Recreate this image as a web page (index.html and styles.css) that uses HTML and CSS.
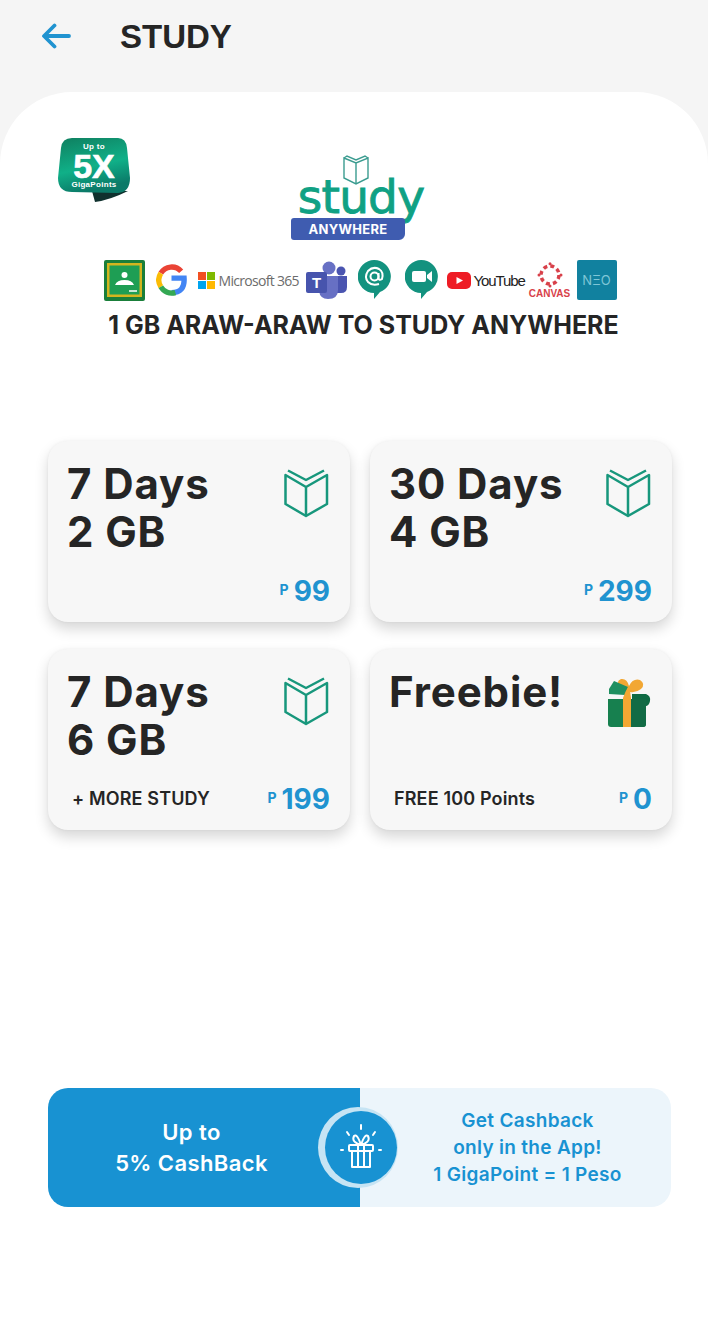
FILE: index.html
```html
<!DOCTYPE html>
<html lang="en">
<head>
    <meta charset="UTF-8">
    <meta name="viewport" content="width=device-width, initial-scale=1.0">
    <title>Study</title>
    <link rel="stylesheet" href="styles.css">
</head>
<body>
    <header class="topbar">
        <svg class="back" viewBox="0 0 30 26" width="30" height="26"><path d="M28 13H4M13.500 2.500L3 13 13.500 23.500" fill="none" stroke="#2093d0" stroke-width="3.800" stroke-linecap="round" stroke-linejoin="round"/></svg>
        <h1>STUDY</h1>
    </header>

    <main class="sheet">
        <section class="promo">
            <div class="badge">
                <svg class="badge-bg" viewBox="0 0 72 64" width="72" height="64">
                    <defs><linearGradient id="bg" x1="0" y1="0" x2="0.300" y2="1"><stop offset="0" stop-color="#0f7f5f"/><stop offset=".6" stop-color="#10b088"/><stop offset="1" stop-color="#0b7a68"/></linearGradient></defs>
                    <path d="M34 53L37 64Q52 62 70 53Z" fill="#10312e"/>
                    <path d="M14 0H60Q68 0 69 10L72 40Q72 54 60 55L14 54Q0 54 0 40L3 10Q4 0 14 0Z" fill="url(#bg)"/>
                </svg>
                <div class="badge-text">
                    <span class="badge-small">Up to</span>
                    <span class="badge-big">5X</span>
                    <span class="badge-small">GigaPoints</span>
                </div>
            </div>

            <div class="logo">
                <svg class="logo-book" viewBox="0 0 28 30" width="28" height="30"><path d="M2 3L14 8 26 3V23L14 29 2 23ZM14 8V29M2 3L5 1 14 5 23 1 26 3" fill="none" stroke="#3b9c90" stroke-width="1.400"/></svg>
                <span class="logo-word">study</span>
                <span class="logo-tag">ANYWHERE</span>
            </div>

            <div class="apps">
                <svg viewBox="0 0 41 41" width="41" height="41"><rect width="41" height="41" rx="2" fill="#1a7f3a"/><rect x="3" y="3" width="35" height="34" fill="#d3b51e"/><rect x="5.500" y="5.500" width="30" height="29" fill="#1e9e54"/><circle cx="20.500" cy="15" r="3" fill="#fff"/><path d="M11 25Q13 20 20.500 20T30 25Z" fill="#fff"/><path d="M25 31H33" stroke="#fff" stroke-width="1.500"/></svg>
                <svg viewBox="0 0 32 32" width="31" height="32"><path d="M16 14H29Q30 29 16 29" fill="none" stroke="#4285f4" stroke-width="5.500"/><path d="M26 7A13 13 0 0 0 5 9" fill="none" stroke="#ea4335" stroke-width="5.500"/><path d="M5 9A13 13 0 0 0 5 23" fill="none" stroke="#fbbc05" stroke-width="5.500"/><path d="M5 23A13 13 0 0 0 20 29" fill="none" stroke="#34a853" stroke-width="5.500"/></svg>
                <div class="ms">
                    <svg viewBox="0 0 17 17" width="17" height="17"><rect width="8" height="8" fill="#f25022"/><rect x="9" width="8" height="8" fill="#7fba00"/><rect y="9" width="8" height="8" fill="#00a4ef"/><rect x="9" y="9" width="8" height="8" fill="#ffb900"/></svg>
                    <span>Microsoft 365</span>
                </div>
                <svg class="teams" viewBox="0 0 41 38" width="41" height="38"><circle cx="23" cy="7" r="6.500" fill="#6770c4"/><circle cx="35" cy="10" r="4.500" fill="#4a54b0"/><path d="M29 15H41V26Q41 32 35 32H29Z" fill="#4a54b0"/><path d="M13 15H32V29Q32 38 22 38 14 38 13 30Z" fill="#6770c4"/><rect y="11" width="21" height="21" rx="2" fill="#4754ad"/><text x="10.500" y="27" class="teams-t">T</text></svg>
                <svg viewBox="0 0 33 40" width="33" height="40"><path d="M16.500 0A16.500 16.500 0 0 1 22 32L16 39V33A16.500 16.500 0 0 1 16.500 0Z" fill="#13927f"/><circle cx="16.500" cy="16.500" r="4" fill="none" stroke="#fff" stroke-width="2"/><path d="M20.500 13V18Q21 21 24 19 26 12 21 9 15 6 10 11 6 17 10 22 14 26 21 24" fill="none" stroke="#fff" stroke-width="2"/></svg>
                <svg class="meet" viewBox="0 0 33 40" width="33" height="40"><path d="M16.500 0A16.500 16.500 0 0 1 22 32L16 39V33A16.500 16.500 0 0 1 16.500 0Z" fill="#13927f"/><rect x="7" y="11" width="14" height="11" rx="2" fill="#fff"/><path d="M22 15L27 11V22L22 18Z" fill="#fff"/></svg>
                <div class="yt">
                    <svg viewBox="0 0 24 17" width="24" height="17"><rect width="24" height="17" rx="5" fill="#ee1c25"/><path d="M9.500 5L16 8.500 9.500 12Z" fill="#fff"/></svg>
                    <span>YouTube</span>
                </div>
                <div class="canvas">
                    <svg viewBox="0 0 26 26" width="26" height="26"><circle cx="13" cy="13" r="9" fill="none" stroke="#d8414a" stroke-width="3.500" stroke-dasharray="4 3.070"/><circle cx="13" cy="1.800" r="1.500" fill="#d8414a"/><circle cx="24" cy="13" r="1.500" fill="#d8414a"/><circle cx="13" cy="24" r="1.500" fill="#d8414a"/><circle cx="2" cy="13" r="1.500" fill="#d8414a"/></svg>
                    <span>CANVAS</span>
                </div>
                <div class="neo">NΞO</div>
            </div>

            <h2 class="headline">1 GB ARAW-ARAW TO STUDY ANYWHERE</h2>
        </section>

        <section class="plans">
            <article class="plan">
                <div class="plan-top">
                    <h3>7 Days<br>2 GB</h3>
                    <svg class="plan-icon" viewBox="0 0 46 50" width="46" height="50"><use href="#book"/></svg>
                </div>
                <div class="plan-bottom">
                    <span class="note"></span>
                    <span class="price"><small>P</small>99</span>
                </div>
            </article>
            <article class="plan">
                <div class="plan-top">
                    <h3>30 Days<br>4 GB</h3>
                    <svg class="plan-icon" viewBox="0 0 46 50" width="46" height="50"><use href="#book"/></svg>
                </div>
                <div class="plan-bottom">
                    <span class="note"></span>
                    <span class="price"><small>P</small>299</span>
                </div>
            </article>
            <article class="plan">
                <div class="plan-top">
                    <h3>7 Days<br>6 GB</h3>
                    <svg class="plan-icon" viewBox="0 0 46 50" width="46" height="50"><use href="#book"/></svg>
                </div>
                <div class="plan-bottom">
                    <span class="note">+ MORE STUDY</span>
                    <span class="price"><small>P</small>199</span>
                </div>
            </article>
            <article class="plan">
                <div class="plan-top">
                    <h3>Freebie!</h3>
                    <svg class="plan-icon" viewBox="0 0 46 50" width="46" height="50">
                        <g transform="translate(2 1)">
                            <path d="M12 12Q7 3 13 1 19 0 21 8 25 0 32 2 38 6 33 11 28 15 22 14Z" fill="#f2a733"/>
                            <path d="M1 11L6 3 20 9 17 17 1 16Z" fill="#1f8f60"/>
                            <path d="M24 16H38Q43 18 42 23 41 29 36 28H24Z" fill="#0f6a44"/>
                            <path d="M0 21H38V46Q38 49 35 49H3Q0 49 0 46Z" fill="#17804f"/>
                            <path d="M23 21H38V46Q38 49 35 49H23Z" fill="#126b45"/>
                            <path d="M15 49V20Q17 14 20 9 23 14 23 20V49Z" fill="#f2a733"/>
                        </g>
                    </svg>
                </div>
                <div class="plan-bottom">
                    <span class="note">FREE 100 Points</span>
                    <span class="price"><small>P</small>0</span>
                </div>
            </article>
        </section>

        <section class="cashback">
            <div class="cashback-left">Up to<br>5% CashBack</div>
            <div class="cashback-right">Get Cashback<br>only in the App!<br>1 GigaPoint = 1 Peso</div>
            <div class="gift-circle">
                <svg viewBox="0 0 44 48" width="44" height="48"><g fill="none" stroke="#fff" stroke-width="2" stroke-linecap="round" stroke-linejoin="round"><rect x="10" y="21" width="24" height="6" rx="1"/><path d="M13 27V43H31V27M19 21V43M25 21V43M22 21Q12 18 15 12 18 9 22 21 26 9 29 12 32 18 22 21ZM22 1V5M8 8L10 11M36 8L34 11M2 26H4M40 26H42"/></g></svg>
            </div>
        </section>
    </main>

    <svg class="defs" width="0" height="0"><defs><g id="book" fill="none" stroke="#17977c" stroke-width="2.500" stroke-linejoin="round"><path d="M1.500 6L22 18 43 6V35L22 47 1.500 35ZM22 18V47"/><path d="M4 1.500L22 11 40 1.500"/></g></defs></svg>
</body>
</html>
```

FILE: styles.css
```css
* {
    box-sizing: border-box;
}
body {
    margin: 0;
    width: 708px;
    min-height: 1334px;
    background-color: #f5f5f5;
    font-family: Inter, "Liberation Sans", sans-serif;
    color: #252525;
    display: flex;
    flex-direction: column;
}
.topbar {
    height: 92px;
    flex: none;
    display: flex;
    align-items: flex-start;
    padding: 23px 0 0 41px;
}
.topbar h1 {
    margin: -8px 0 0 49px;
    font-family: "Liberation Sans", sans-serif;
    font-size: 33px;
    line-height: 44px;
    font-weight: 700;
}
.sheet {
    flex: 1;
    background-color: #fff;
    border-radius: 72px 72px 0 0;
    padding: 46px 36px 0 48px;
    display: flex;
    flex-direction: column;
}
.promo {
    position: relative;
    display: flex;
    flex-direction: column;
    align-items: center;
    height: 303px;
}
.badge {
    position: absolute;
    left: 10px;
    top: 0;
    width: 72px;
    height: 64px;
}
.badge-bg {
    display: block;
}
.badge-text {
    position: absolute;
    top: 4px;
    left: 0;
    width: 72px;
    display: flex;
    flex-direction: column;
    align-items: center;
    color: #fff;
    font-family: "Liberation Sans", sans-serif;
    font-weight: 700;
}
.badge-small {
    font-size: 8px;
    line-height: 10px;
    letter-spacing: .3px;
}
.badge-big {
    font-size: 34px;
    line-height: 28px;
    -webkit-text-stroke: .6px #fff;
}
.logo {
    margin: 17px 0 0 -2px;
    display: flex;
    flex-direction: column;
    align-items: center;
    position: relative;
    width: 136px;
    height: 85px;
}
.logo-book {
    margin-left: -6px;
    flex: none;
}
.logo-word {
    margin: -12px 0 0 4px;
    font-family: "DejaVu Sans", sans-serif;
    font-size: 47px;
    line-height: 48px;
    color: #10a184;
    letter-spacing: -.8px;
    -webkit-text-stroke: .9px #10a184;
}
.logo-tag {
    position: absolute;
    left: 0;
    top: 63px;
    width: 114px;
    height: 22px;
    border-radius: 3px 3px 6px 3px;
    background-color: #3f5cb0;
    color: #fff;
    font-size: 13px;
    line-height: 22px;
    font-weight: 700;
    letter-spacing: .3px;
    text-align: center;
}
.apps {
    margin-top: 20px;
    display: flex;
    align-items: center;
    gap: 11px;
    height: 40px;
}
.apps svg {
    flex: none;
}
.ms {
    display: flex;
    align-items: center;
    gap: 4px;
    width: 102px;
    color: #6c6c6c;
    font-family: "Open Sans", sans-serif;
    font-size: 14px;
    letter-spacing: -.7px;
    white-space: nowrap;
}
.teams {
    margin-left: -5px;
}
.meet {
    margin-left: 3px;
}
.teams-t {
    fill: #fff;
    font-family: "Liberation Sans", sans-serif;
    font-size: 15px;
    font-weight: 700;
    text-anchor: middle;
}
.yt {
    display: flex;
    align-items: center;
    gap: 3px;
    width: 76px;
    margin-left: -2px;
    color: #222;
    font-family: "Liberation Sans", sans-serif;
    font-size: 15px;
    letter-spacing: -1.100px;
    white-space: nowrap;
}
.canvas {
    display: flex;
    flex-direction: column;
    align-items: center;
    width: 42px;
    margin-left: -5px;
    color: #d8414a;
    font-family: "Liberation Sans", sans-serif;
    font-size: 10px;
    line-height: 11px;
    font-weight: 700;
}
.neo {
    width: 40px;
    height: 40px;
    margin-left: -5px;
    background-color: #11819f;
    border-radius: 2px;
    color: #7fc6d6;
    font-size: 13px;
    line-height: 40px;
    text-align: center;
}
.headline {
    margin: 10px 0 0 7px;
    font-size: 25px;
    line-height: 30px;
    font-weight: 700;
    white-space: nowrap;
}
.plans {
    display: grid;
    grid-template-columns: 302px 302px;
    gap: 27px 20px;
}
.plan {
    height: 181px;
    background-color: #f7f7f7;
    border-radius: 20px;
    box-shadow: 0 7px 14px rgba(0, 0, 0, 0.16), 0 0 3px rgba(0, 0, 0, 0.05);
    padding: 19px 20px 14px 19px;
    display: flex;
    flex-direction: column;
    justify-content: space-between;
}
.plan-top {
    display: flex;
    justify-content: space-between;
    align-items: flex-start;
}
.plan-top h3 {
    margin: 0;
    font-size: 42px;
    line-height: 48px;
    font-weight: 700;
    letter-spacing: .9px;
}
.plan-icon {
    margin-top: 9px;
    flex: none;
}
.plan-bottom {
    display: flex;
    justify-content: space-between;
    align-items: flex-end;
}
.note {
    margin-left: 5px;
    margin-bottom: 5px;
    font-size: 18px;
    line-height: 24px;
    font-weight: 600;
    letter-spacing: .15px;
}
.price {
    color: #2093d0;
    font-size: 28px;
    line-height: 34px;
    font-weight: 700;
}
.price small {
    font-size: 14px;
    margin-right: 5px;
    vertical-align: 6px;
}
.cashback {
    position: relative;
    margin-top: 258px;
    width: 623px;
    height: 119px;
    border-radius: 20px;
    overflow: hidden;
    display: grid;
    grid-template-columns: 312px 311px;
    text-align: center;
    font-weight: 600;
}
.cashback-left {
    background-color: #1892d2;
    color: #fff;
    font-size: 22px;
    line-height: 31px;
    letter-spacing: .4px;
    padding: 29px 25px 0 0;
}
.cashback-right {
    background-color: #ecf5fb;
    color: #1892d2;
    font-size: 19px;
    line-height: 27px;
    letter-spacing: .3px;
    padding: 19px 0 0 24px;
}
.gift-circle {
    position: absolute;
    left: 277px;
    top: 23px;
    width: 72px;
    height: 73px;
    border-radius: 50%;
    background-color: #1892d2;
    box-shadow: -3px 0 0 4px #c6e4f4;
    display: flex;
    align-items: center;
    justify-content: center;
}
.defs {
    position: absolute;
}
```
